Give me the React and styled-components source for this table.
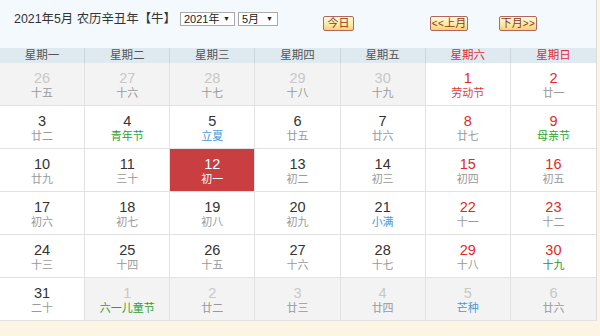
import React from 'react'
import styled, { createGlobalStyle } from 'styled-components'

const GlobalStyle = createGlobalStyle`
    html, body {
        margin: 0;
        padding: 0;
        background: #fcf5e4;
        font-family: "Liberation Sans", "Noto Sans CJK SC", sans-serif;
    }
`;

const Wrapper = styled.div`
    width: 596px;
    border-right: 1px solid #dcdcdc;
    background: #fff;
`;

const TopBar = styled.div`
    height: 48px;
    box-sizing: border-box;
    background: #f4f9fd;
    display: flex;
    align-items: flex-start;
    padding: 11px 0 0 14px;
`;

const Title = styled.div`
    width: 166px;
    font-size: 12.4px;
    color: #333;
    line-height: 16px;
    white-space: nowrap;
`;

const Select = styled.div`
    box-sizing: border-box;
    width: ${p => p.w}px;
    height: 14px;
    margin-top: 1px;
    margin-right: 3px;
    border: 1px solid #a9a9a9;
    background: #fff;
    font-size: 11px;
    line-height: 12px;
    color: #222;
    padding-left: 3px;
    display: flex;
    justify-content: space-between;
    align-items: center;
`;

const Arrow = styled.span`
    font-size: 7px;
    margin-right: 4px;
`;

const Btn = styled.div`
    box-sizing: border-box;
    width: ${p => p.w}px;
    height: 15px;
    margin-top: 5px;
    margin-left: ${p => p.ml}px;
    border: 1px solid #b2665c;
    border-radius: 2px;
    background: linear-gradient(#fffbe0, #fde7a4 60%, #f8cf78);
    color: #8a3b16;
    font-size: 11px;
    line-height: 13px;
    text-align: center;
    white-space: nowrap;
`;

const Chev = styled.span`
    font-size: 10px;
    letter-spacing: 0.5px;
`;

const Grid = styled.div`
    display: grid;
    grid-template-columns: repeat(7, 1fr);
`;

const WeekCell = styled.div`
    height: 15px;
    background: #dfe9f0;
    border-right: 1px solid #c9d6de;
    font-size: 11.5px;
    line-height: 15px;
    text-align: center;
    color: ${p => (p.weekend ? '#d8303a' : '#555')};
    &:last-child { border-right: none; }
`;

const DayCell = styled.div`
    height: 43px;
    box-sizing: border-box;
    border-right: 1px solid #e2e2e2;
    border-bottom: 1px solid #e2e2e2;
    background: ${p => (p.today ? '#c93e40' : p.other ? '#f3f3f3' : '#fff')};
    text-align: center;
    padding-top: 7px;
    &:nth-child(7n) { border-right: none; }
`;

const DayNum = styled.div`
    font-size: 14.5px;
    line-height: 16px;
    color: ${p => p.color};
`;

const Lunar = styled.div`
    font-size: 11px;
    line-height: 14px;
    color: ${p => p.color};
`;

const GREEN = '#2ea02e';
const BLUE = '#4a9ad2';
const RED = '#e03a3a';

const days = [
    [26, '十五', 1], [27, '十六', 1], [28, '十七', 1], [29, '十八', 1], [30, '十九', 1], [1, '劳动节', 0, RED], [2, '廿一'],
    [3, '廿二'], [4, '青年节', 0, GREEN], [5, '立夏', 0, BLUE], [6, '廿五'], [7, '廿六'], [8, '廿七'], [9, '母亲节', 0, GREEN],
    [10, '廿九'], [11, '三十'], [12, '初一', 0, null, true], [13, '初二'], [14, '初三'], [15, '初四'], [16, '初五'],
    [17, '初六'], [18, '初七'], [19, '初八'], [20, '初九'], [21, '小满', 0, BLUE], [22, '十一'], [23, '十二'],
    [24, '十三'], [25, '十四'], [26, '十五'], [27, '十六'], [28, '十七'], [29, '十八'], [30, '十九', 0, '#2a962a'],
    [31, '二十'], [1, '六一儿童节', 1, GREEN], [2, '廿二', 1], [3, '廿三', 1], [4, '廿四', 1], [5, '芒种', 1, BLUE], [6, '廿六', 1],
];

const weekNames = ['星期一', '星期二', '星期三', '星期四', '星期五', '星期六', '星期日'];

export default function App() {
    return (
        <>
            <GlobalStyle />
            <Wrapper>
                <TopBar>
                    <Title>2021年5月 农历辛丑年【牛】</Title>
                    <Select w={55}>2021年<Arrow>▼</Arrow></Select>
                    <Select w={40}>5月<Arrow>▼</Arrow></Select>
                    <Btn w={31} ml={42}>今日</Btn>
                    <Btn w={38} ml={76}><Chev>&lt;&lt;</Chev>上月</Btn>
                    <Btn w={38} ml={31}>下月<Chev>&gt;&gt;</Chev></Btn>
                </TopBar>
                <Grid>
                    {weekNames.map((w, i) => (
                        <WeekCell key={w} weekend={i > 4}>{w}</WeekCell>
                    ))}
                </Grid>
                <Grid>
                    {days.map(([n, lunar, other, lc, today], i) => {
                        const weekend = i % 7 > 4;
                        let numColor = '#333';
                        if (other) numColor = '#c8c8c8';
                        else if (today) numColor = '#fff';
                        else if (weekend) numColor = '#e02a2a';
                        let lunarColor = lc || '#999';
                        if (today) lunarColor = '#fff';
                        return (
                            <DayCell key={i} other={other} today={today}>
                                <DayNum color={numColor}>{n}</DayNum>
                                <Lunar color={lunarColor}>{lunar}</Lunar>
                            </DayCell>
                        );
                    })}
                </Grid>
            </Wrapper>
        </>
    );
}
